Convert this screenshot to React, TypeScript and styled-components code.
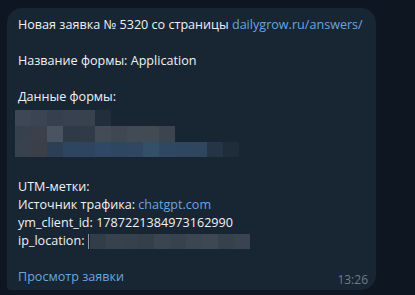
import React from "react";
import styled, { createGlobalStyle } from "styled-components";

const Global = createGlobalStyle`
  html, body { margin: 0; padding: 0; background: #0e1621; }
  body { width: 415px; height: 295px; overflow: hidden; font-family: "Open Sans", "Noto Sans", sans-serif; }
`;

const Page = styled.div`
  padding: 8px 0 0 7px;
`;

const Bubble = styled.div`
  width: 369px;
  box-sizing: border-box;
  background: #182533;
  border-radius: 15px 15px 15px 4px;
  padding: 8px 9px 2px 11px;
  color: #f0f2f4;
  font-size: 12.6px;
  line-height: 18px;
`;

const Line = styled.div`
  height: 18px;
  white-space: nowrap;
`;

const Link = styled.span`
  color: #62a8e2;
`;

const FooterLink = styled(Link)`
  align-self: flex-start;
  line-height: 18px;
`;

const Mosaic = styled.div`
  display: flex;
  flex-direction: column;
  margin-left: -3px;
`;

const MosaicRow = styled.div<{ $h: number }>`
  display: flex;
  height: ${(p) => p.$h}px;
`;

const Cell = styled.div<{ $c: string; $w?: number }>`
  width: ${(p) => p.$w ?? 16}px;
  height: 100%;
  background: ${(p) => p.$c};
`;

const InlineBlur = styled.span`
  display: inline-flex;
  vertical-align: -4px;
  height: 15px;
  margin-left: 1px;
`;

const Caret = styled.span`
  display: inline-block;
  width: 1px;
  height: 15px;
  vertical-align: -4px;
  background: #8a96a3;
`;

const Footer = styled.div`
  display: flex;
  justify-content: space-between;
  align-items: flex-end;
  height: 20px;
`;

const Time = styled.span`
  color: #6b7c8c;
  font-size: 12px;
  line-height: 16px;
  margin-right: -1px;
`;

const rows: { h: number; cells: string[] }[] = [
  {
    h: 16,
    cells: ["#3d4755", "#3a4452", "#353f4d", "#37414f", "#38424f", "#222e3c"],
  },
  {
    h: 16,
    cells: [
      "#37414e", "#3b404b", "#4a5360", "#2f3a47", "#313b48",
      "#434b56", "#3f4753", "#414a55", "#424a54", "#3c4450",
    ],
  },
  {
    h: 15,
    cells: [
      "#38424e", "#3a3f48", "#2c3f55", "#2d4560", "#2d4560", "#2f4866",
      "#2d4763", "#2f4763", "#345069", "#2e4762", "#2f4661", "#2f465f",
      "#263546", "#1f2c3a",
    ],
  },
];

const ipCells = [
  "#323d4a", "#37424f", "#36414e", "#343f4c", "#3a4552",
  "#37424f", "#3b4653", "#3e4855", "#36414e", "#3a4450",
];

export default function App() {
  return (
    <>
      <Global />
      <Page>
        <Bubble>
          <Line>
            Новая заявка № 5320 со страницы <Link>dailygrow.ru/answers/</Link>
          </Line>
          <Line />
          <Line>Название формы: Application</Line>
          <Line />
          <Line>Данные формы:</Line>
          <Mosaic>
            <MosaicRow $h={4} />
            {rows.map((r, i) => (
              <MosaicRow key={i} $h={r.h}>
                {r.cells.map((c, j) => (
                  <Cell key={j} $c={c} />
                ))}
              </MosaicRow>
            ))}
            <MosaicRow $h={21} />
          </Mosaic>
          <Line>UTM-метки:</Line>
          <Line>
            Источник трафика: <Link>chatgpt.com</Link>
          </Line>
          <Line>ym_client_id: 1787221384973162990</Line>
          <Line>
            ip_location: <Caret />
            <InlineBlur>
              {ipCells.map((c, j) => (
                <Cell key={j} $c={c} />
              ))}
            </InlineBlur>
          </Line>
          <Line />
          <Footer>
            <FooterLink>Просмотр заявки</FooterLink>
            <Time>13:26</Time>
          </Footer>
        </Bubble>
      </Page>
    </>
  );
}
